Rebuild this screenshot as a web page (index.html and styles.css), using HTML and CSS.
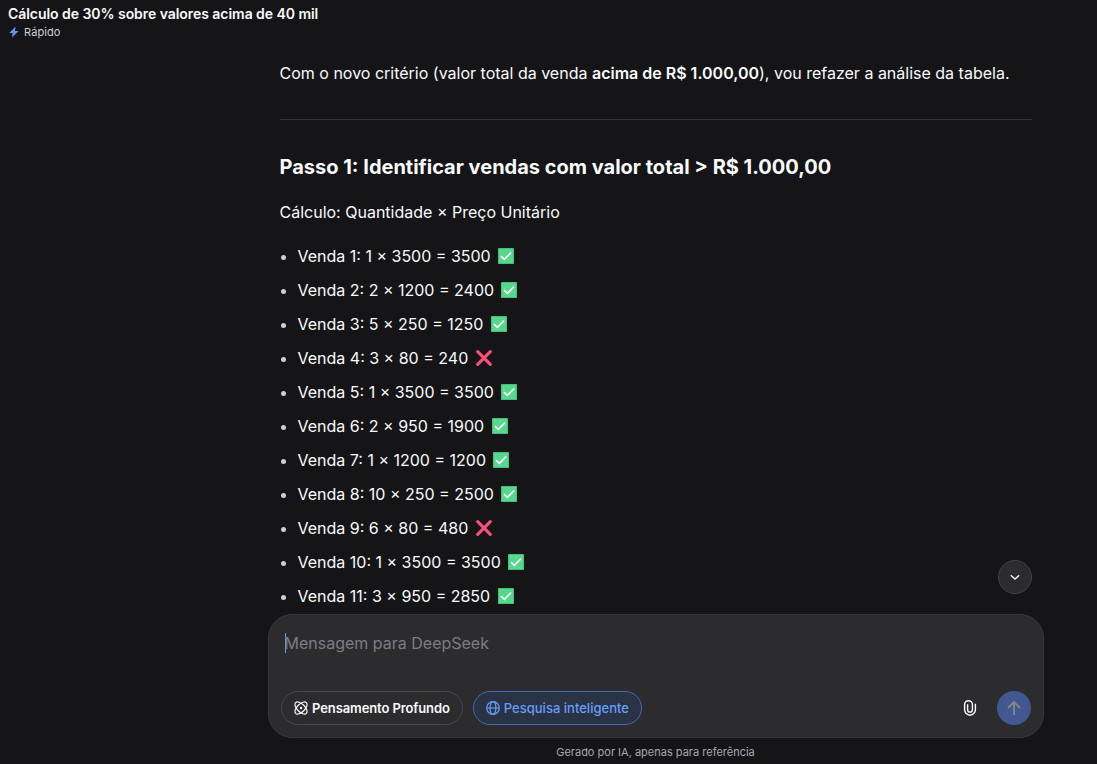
FILE: index.html
```html
<!DOCTYPE html>
<html lang="pt-BR">
<head>
    <meta charset="UTF-8">
    <meta name="viewport" content="width=device-width, initial-scale=1.0">
    <title>DeepSeek</title>
    <link rel="stylesheet" href="styles.css">
</head>
<body>
    <svg class="sprite">
        <symbol id="check" viewBox="0 0 16 16">
            <rect width="16" height="16" rx="0.6" fill="#45b678"/>
            <rect x="0.8" y="0.8" width="14.4" height="14.4" rx="0.6" fill="#56d88c"/>
            <path d="M3 8.2l3.4 3.2L13 4.6" fill="none" stroke="#fff" stroke-width="1.6"/>
        </symbol>
        <symbol id="cross" viewBox="0 0 16 16">
            <path d="M1.7 1.7l12.6 12.6M14.3 1.7L1.7 14.3" fill="none" stroke="#fb4f78" stroke-width="3.1" stroke-linecap="round"/>
        </symbol>
    </svg>

    <div class="page">
        <header class="header">
            <div class="title">Cálculo de 30% sobre valores acima de 40 mil</div>
            <div class="mode">
                <svg width="12" height="12" viewBox="0 0 12 12"><path d="M7.6.6L1.2 6.9h3.5L4 11.4l6.6-6.3H7z" fill="#5c94f8"/></svg>
                <span>Rápido</span>
            </div>
        </header>

        <main class="chat">
            <p>Com o novo critério (valor total da venda <strong>acima de R$ 1.000,00</strong>), vou refazer a análise da tabela.</p>
            <hr>
            <h3>Passo 1: Identificar vendas com valor total &gt; R$ 1.000,00</h3>
            <p>Cálculo: Quantidade × Preço Unitário</p>
            <ul class="sales">
                <li>Venda 1: 1 × 3500 = 3500 <svg class="emoji"><use href="#check"/></svg></li>
                <li>Venda 2: 2 × 1200 = 2400 <svg class="emoji"><use href="#check"/></svg></li>
                <li>Venda 3: 5 × 250 = 1250 <svg class="emoji"><use href="#check"/></svg></li>
                <li>Venda 4: 3 × 80 = 240 <svg class="emoji"><use href="#cross"/></svg></li>
                <li>Venda 5: 1 × 3500 = 3500 <svg class="emoji"><use href="#check"/></svg></li>
                <li>Venda 6: 2 × 950 = 1900 <svg class="emoji"><use href="#check"/></svg></li>
                <li>Venda 7: 1 × 1200 = 1200 <svg class="emoji"><use href="#check"/></svg></li>
                <li>Venda 8: 10 × 250 = 2500 <svg class="emoji"><use href="#check"/></svg></li>
                <li>Venda 9: 6 × 80 = 480 <svg class="emoji"><use href="#cross"/></svg></li>
                <li>Venda 10: 1 × 3500 = 3500 <svg class="emoji"><use href="#check"/></svg></li>
                <li>Venda 11: 3 × 950 = 2850 <svg class="emoji"><use href="#check"/></svg></li>
            </ul>
        </main>

        <div class="composer">
            <button class="scroll-down">
                <svg width="14" height="14" viewBox="0 0 14 14"><path d="M2.8 5.2L7 9.1l4.2-3.9" fill="none" stroke="#f0f0f1" stroke-width="1.4"/></svg>
            </button>
            <div class="input"><span class="caret"></span>Mensagem para DeepSeek</div>
            <div class="tools">
                <button class="pill">
                    <svg width="14" height="14" viewBox="0 0 14 14" fill="none" stroke="currentColor" stroke-width="1.2">
                        <ellipse cx="7" cy="7" rx="7.6" ry="3.9" transform="rotate(45 7 7)"/>
                        <ellipse cx="7" cy="7" rx="7.6" ry="3.9" transform="rotate(-45 7 7)"/>
                        <circle cx="7" cy="7" r="1.2" fill="currentColor" stroke="none"/>
                    </svg>
                    <span>Pensamento Profundo</span>
                </button>
                <button class="pill active">
                    <svg width="14" height="14" viewBox="0 0 14 14" fill="none" stroke="currentColor" stroke-width="1.2">
                        <circle cx="7" cy="7" r="6.3"/>
                        <ellipse cx="7" cy="7" rx="2.9" ry="6.3"/>
                        <path d="M.7 7h12.6"/>
                    </svg>
                    <span>Pesquisa inteligente</span>
                </button>
                <button class="attach">
                    <svg width="16" height="16" viewBox="0 0 16 16"><path d="M13.4 3.8v6a5.4 5.4 0 0 1-10.8 0V4.6a3.9 3.9 0 0 1 7.8 0v5.1a2.4 2.4 0 0 1-4.8 0V4.3" fill="none"/></svg>
                </button>
                <button class="send">
                    <svg width="16" height="16" viewBox="0 0 16 16"><path d="M8 15V2M2 8l6-6 6 6" fill="none" stroke="#85868a" stroke-width="1.9"/></svg>
                </button>
            </div>
        </div>

        <footer class="note">Gerado por IA, apenas para referência</footer>
    </div>
</body>
</html>
```
FILE: styles.css
```css
html,
body {
    margin: 0;
    height: 100%;
}
body {
    background: #151517;
    color: #f9fafb;
    font-family: Inter, "Liberation Sans", sans-serif;
    font-size: 16px;
    line-height: 28px;
    overflow: hidden;
}
button {
    font: inherit;
    box-sizing: border-box;
    padding: 0;
    display: flex;
    align-items: center;
    justify-content: center;
    color: inherit;
}
.sprite {
    display: none;
}
.page {
    display: flex;
    flex-direction: column;
    height: 100%;
}
.header {
    flex: none;
    height: 55px;
    padding: 4px 8px 0;
    box-sizing: border-box;
}
.title {
    font-size: 14px;
    font-weight: 600;
    line-height: 20px;
    letter-spacing: -0.05px;
}
.mode {
    display: flex;
    align-items: center;
    gap: 4px;
    font-size: 11px;
    line-height: 16px;
    letter-spacing: 0.1px;
    color: #cdcfd3;
}
.chat {
    flex: 1;
    min-height: 0;
    width: 752px;
    margin-left: 279.5px;
    padding-top: 4px;
    box-sizing: border-box;
    overflow: hidden;
}
.chat p {
    margin: 0;
}
.chat strong {
    font-weight: 600;
}
.chat hr {
    height: 1px;
    margin: 32px 0;
    border: 0;
    background: #343437;
}
.chat h3 {
    margin: 0 0 16px;
    font-size: 20px;
    font-weight: 700;
    line-height: 30px;
}
.sales {
    margin: 16px 0 0;
    padding: 0;
    list-style: none;
}
.sales li {
    display: flex;
    align-items: center;
    white-space: pre;
    margin-bottom: 6px;
}
.sales li::before {
    content: "";
    width: 5px;
    height: 5px;
    margin: 3px 11.5px 0 1.5px;
    border-radius: 50%;
    background: #cdcfd3;
}
.emoji {
    width: 16px;
    height: 16px;
    margin-left: 2.9px;
}
/* message box */
.composer {
    flex: none;
    position: relative;
    display: flex;
    flex-direction: column;
    justify-content: space-between;
    width: 776px;
    height: 124px;
    margin-left: 268px;
    padding: 14px 12px 12px;
    box-sizing: border-box;
    border: 1px solid #39393c;
    border-radius: 24px;
    background: #2c2c2e;
}
.input {
    display: flex;
    align-items: center;
    padding-left: 4px;
    color: #7b7d83;
}
.caret {
    width: 1px;
    height: 20px;
    margin-right: -1.5px;
    background: #6a9cff;
}
.tools {
    display: flex;
    align-items: center;
}
.pill {
    height: 34px;
    padding: 0 12px;
    gap: 4px;
    margin-right: 10px;
    border: 1px solid #48484b;
    border-radius: 17px;
    background: none;
    font-size: 13px;
    font-weight: 600;
    letter-spacing: -0.1px;
}
.pill.active {
    border-color: #4668b4;
    background: #2a3245;
    color: #679ef8;
    font-weight: 500;
    letter-spacing: 0.01px;
}
.attach {
    width: 34px;
    height: 34px;
    margin-left: auto;
    margin-right: 10px;
    border: 0;
    background: none;
}
.attach path {
    stroke: #f9fafb;
    stroke-width: 1.4;
}
.send {
    width: 34px;
    height: 34px;
    border: 0;
    border-radius: 50%;
    background: #415891;
}
.scroll-down {
    position: absolute;
    right: 11px;
    top: -55px;
    width: 34px;
    height: 34px;
    border: 1px solid #414144;
    border-radius: 50%;
    background: #2c2c2e;
}
.note {
    flex: none;
    width: 775px;
    margin-left: 268px;
    padding-top: 2px;
    text-align: center;
    font-size: 11px;
    line-height: 24px;
    color: #a5a7ac;
}
```
